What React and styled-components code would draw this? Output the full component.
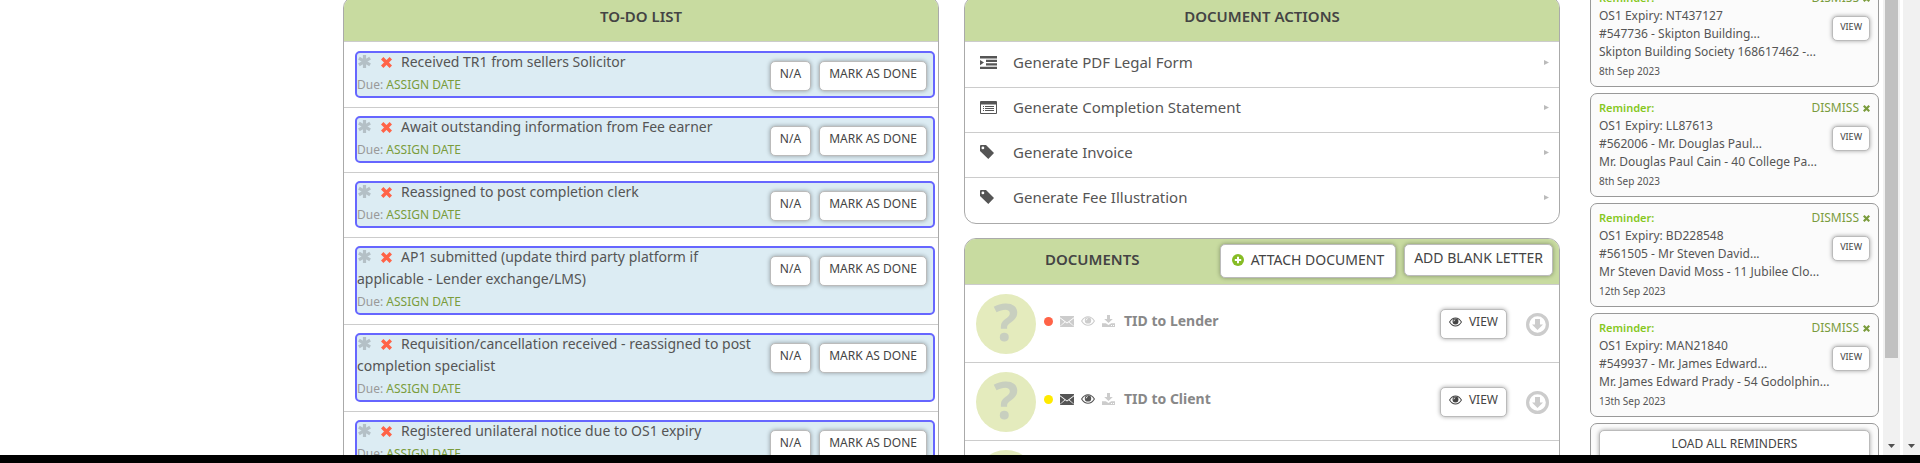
import React from "react";
import styled, { createGlobalStyle } from "styled-components";

const GlobalStyle = createGlobalStyle`
  * { box-sizing: border-box; }
  body {
    margin: 0;
    background: #fff;
    color: #555;
    font-family: "Noto Sans", "Open Sans", sans-serif;
    font-size: 14px;
  }
  h2, h3, p, ul { margin: 0; padding: 0; }
  ul { list-style: none; }
  svg { display: block; flex: none; }
`;

const Window = styled.div`
  display: flex;
  flex-direction: column;
  height: 100vh;
  overflow: hidden;
`;

const Viewport = styled.div`
  display: flex;
  flex: 1;
  min-height: 0;
  overflow: hidden;
`;

const BottomBar = styled.div`
  flex: none;
  height: 8px;
  background: #000;
`;

const Main = styled.main`
  display: grid;
  grid-template-columns: 1fr 1fr;
  gap: 25px;
  flex: 1;
  min-width: 0;
  margin-top: -4px;
  margin-left: 343px;
  align-items: start;
`;

const Column = styled.div`
  display: flex;
  flex-direction: column;
  gap: 14px;
  min-width: 0;
`;

const Panel = styled.section`
  border: 1px solid #aaa;
  border-radius: 12px;
  overflow: hidden;
`;

const PanelHeader = styled.header`
  display: flex;
  justify-content: center;
  height: 45px;
  padding-top: 8px;
  border-bottom: 1px solid #ccc;
  background: #c8dba0;
`;

const ToolHeader = styled(PanelHeader)`
  justify-content: flex-end;
  align-items: flex-start;
  gap: 8px;
  height: 46px;
  padding: 5px 6px 0 80px;
`;

const Title = styled.h2`
  color: #444;
  font-size: 15px;
  font-weight: 600;
  line-height: 22px;
  white-space: nowrap;
`;

const ToolTitle = styled(Title)`
  margin-right: auto;
  padding-top: 4px;
`;

const Button = styled.button`
  display: inline-flex;
  flex: none;
  align-items: center;
  justify-content: center;
  gap: 7px;
  height: 30px;
  padding: 0 8px 4px;
  border: 1px solid #bbb;
  border-radius: 5px;
  background: #fff;
  box-shadow: 0 0 4px rgba(0, 0, 0, 0.35);
  color: #444;
  font-family: inherit;
  font-size: 12px;
  line-height: 18px;
  white-space: nowrap;
`;

const TaskButton = styled(Button)`
  padding: 0 9px 4px;
`;

const AttachButton = styled(Button)`
  height: 34px;
  padding: 0 11px 2px;
  font-size: 14px;
`;

const LetterButton = styled(Button)`
  height: 32px;
  padding: 0 9px 4px;
  font-size: 14px;
`;

const TaskList = styled.ul`
  padding-top: 1px;
`;

const Task = styled.li`
  padding: 8px 3px 9px 11px;
  border-bottom: 1px solid #ccc;
`;

const TaskBox = styled.div`
  display: flex;
  align-items: flex-start;
  gap: 8px;
  padding-right: 6px;
  border: 2px solid #6666ff;
  border-radius: 5px;
  background: #dcecf3;
`;

const TaskText = styled.div`
  flex: 1;
  min-width: 0;
  margin-top: -2px;
  padding-bottom: 2px;
`;

const TaskName = styled.h3`
  color: #555;
  font-size: 14px;
  font-weight: 400;
  line-height: 22px;

  svg { display: inline-block; vertical-align: -1px; margin: 0 9px 0 1px; }
`;

const Due = styled.p`
  padding-top: 3px;
  color: #999;
  font-size: 12px;
  line-height: 18px;
`;

const GreenLink = styled.a`
  color: #7a9c3c;
  text-decoration: none;
`;

const TaskButtons = styled.div`
  display: flex;
  gap: 8px;
  padding-top: 8px;
`;

const ActionList = styled.ul`
  padding-top: 1px;
`;

const Action = styled.li`
  min-height: 45px;
  border-bottom: 1px solid #ccc;
  &:last-child { border-bottom: 0; }
`;

const ActionLink = styled.a`
  display: grid;
  grid-template-columns: 33px 1fr auto;
  align-items: center;
  height: 44px;
  padding: 0 10px 6px 15px;
  color: #555;
  font-size: 15px;
  text-decoration: none;
`;

const DocRow = styled.li`
  display: flex;
  align-items: flex-start;
  padding: 9px 10px 8px 11px;
  border-bottom: 1px solid #ccc;
`;

const Badge = styled.span`
  display: flex;
  align-items: center;
  justify-content: center;
  width: 60px;
  height: 60px;
  padding-bottom: 6px;
  border-radius: 50%;
  background: #e4ebbd;
  color: #c8cfbf;
  font-size: 52px;
  font-weight: 700;
  line-height: 60px;
`;

const DocInfo = styled.div`
  display: flex;
  align-items: center;
  gap: 7px;
  flex: 1;
  padding: 16px 0 0 8px;
`;

const Dot = styled.span`
  width: 9px;
  height: 9px;
  border-radius: 50%;
  background: ${(p) => p.$color};
`;

const DocName = styled.h3`
  padding-left: 2px;
  color: #888;
  font-size: 14px;
  font-weight: 700;
  line-height: 22px;
`;

const DocButtons = styled.div`
  display: flex;
  align-items: center;
  gap: 19px;
  padding-top: 15px;
`;

const IconLink = styled.a`
  display: block;
  color: #ccc;
`;

const Reminders = styled.aside`
  display: flex;
  flex-direction: column;
  gap: 6px;
  flex: none;
  width: 289px;
  margin: -17px 4px 0 30px;
`;

const Card = styled.article`
  flex: none;
  height: 104px;
  padding: 5px 8px;
  border: 1px solid #999;
  border-radius: 7px;
  background: #fbfbfb;
`;

const CardTop = styled.div`
  display: flex;
  justify-content: space-between;
  line-height: 18px;
`;

const CardLabel = styled.h3`
  color: #86c81e;
  font-size: 11px;
  font-weight: 600;
`;

const Dismiss = styled(GreenLink)`
  display: flex;
  align-items: center;
  gap: 4px;
  font-size: 12px;
`;

const CardBody = styled.div`
  display: grid;
  grid-template-columns: 1fr auto;
  font-size: 12px;
  line-height: 18px;
`;

const Lines = styled.div`
  grid-area: 1 / 1 / 2 / 3;
  white-space: nowrap;
`;

const SmallButton = styled(Button)`
  grid-area: 1 / 2 / 2 / 3;
  height: 25px;
  margin-top: 9px;
  padding: 0 7px 4px;
  font-size: 9px;
`;

const DateText = styled.p`
  font-size: 10px;
  line-height: 20px;
`;

const LoadButton = styled(Button)`
  width: 100%;
  margin-top: 1px;
  padding-bottom: 2px;
`;

const Track = styled.div`
  display: flex;
  flex-direction: column;
  justify-content: space-between;
  align-items: center;
  flex: none;
  width: 17px;
  margin-right: ${(p) => p.$gap || 0}px;
  padding-bottom: 7px;
  background: #f1f1f1;
`;

const Thumb = styled.div`
  width: 13px;
  height: 80%;
  background: #c1c1c1;
`;

const ArrowSvg = styled.svg`
  margin-top: auto;
`;

const ScrollArrow = () => (
  <ArrowSvg width="7" height="4" viewBox="0 0 7 4" fill="#505050">
    <path d="M0 0h7L3.5 4z" />
  </ArrowSvg>
);

const Asterisk = () => (
  <svg width="13" height="13" viewBox="0 0 13 13" stroke="#b4c0c6" strokeWidth="3.2">
    <path d="M6.500 0v13M.9 3.200l11.200 6.600M.9 9.800L12.100 3.200" />
  </svg>
);

const Cross = ({ size = 11, color = "#ff6347" }) => (
  <svg width={size} height={size} viewBox="0 0 11 11" stroke={color} strokeWidth="3.4">
    <path d="M1.200 1.200l8.600 8.600M9.800 1.200L1.200 9.800" />
  </svg>
);

const IndentIcon = () => (
  <svg width="17" height="13" viewBox="0 0 17 13" fill="#555">
    <path d="M0 0h17v2.400H0zM6 3.700h11V6H6zM6 7.200h11v2.400H6zM0 10.700h17V13H0zM0 3.900l4 2.700-4 2.700z" />
  </svg>
);

const ListIcon = () => (
  <svg width="17" height="13" viewBox="0 0 17 13" fill="#555">
    <path
      fillRule="evenodd"
      d="M1 0h15q1 0 1 1v11q0 1-1 1H1q-1 0-1-1V1q0-1 1-1zM1 3.500v8.500h15V3.500zM3 5h1v1H3zM5 5h9v1H5zM3 7h1v1H3zM5 7h9v1H5zM3 9h1v1H3zM5 9h9v1H5z"
    />
  </svg>
);

const TagIcon = () => (
  <svg width="14" height="14" viewBox="0 0 14 14" fill="#555">
    <path fillRule="evenodd" d="M0 1q0-1 1-1h5l8 8-5.700 6L0 6zM2.900 1.500a1.400 1.400 0 100 2.800 1.400 1.400 0 000-2.800z" />
  </svg>
);

const PlusIcon = () => (
  <svg width="12" height="12" viewBox="0 0 12 12">
    <circle cx="6" cy="6" r="6" fill="#86bc25" />
    <path d="M6 2.800v6.400M2.800 6h6.400" stroke="#fff" strokeWidth="2" />
  </svg>
);

const MailIcon = ({ color }) => (
  <svg width="14" height="11" viewBox="0 0 14 11" fill={color}>
    <path d="M0 0h14v1.300L7 6.600 0 1.300zM0 2.200l4.600 3.500L0 9.900zM14 2.200v7.700L9.400 5.700zM5.200 6.200L7 7.600l1.800-1.400L14 10.600v.4H0v-.4z" />
  </svg>
);

const EyeIcon = ({ color = "#444", width = 14 }) => (
  <svg width={width} height="10" viewBox="0 0 14 10" fill="none" stroke={color}>
    <path d="M.6 5Q3.200.7 7 .7T13.400 5Q10.800 9.300 7 9.300T.6 5z" strokeWidth="1.100" />
    <circle cx="7" cy="4.400" r="3.200" fill={color} stroke="none" />
    <path d="M5.200 4.300Q5.300 2.800 6.700 2.600" stroke="#fff" strokeWidth=".9" />
  </svg>
);

const SaveIcon = () => (
  <svg width="13" height="12" viewBox="0 0 13 12" fill="#ccc">
    <path d="M5 0h3v4h2.800L6.500 8 2.200 4H5z" />
    <path fillRule="evenodd" d="M0 8.300h3.800L6.500 10l2.700-1.700H13V12H0zM9 10h1v1H9zM11 10h1v1h-1z" />
  </svg>
);

const DownCircle = () => (
  <svg width="23" height="23" viewBox="0 0 23 23" fill="none" stroke="#ccc">
    <circle cx="11.500" cy="11.500" r="9.900" strokeWidth="3.200" />
    <path d="M9 6h5v5.500h3L11.500 17 6 11.500h3z" fill="#ccc" stroke="none" />
  </svg>
);

const tasks = [
  "Received TR1 from sellers Solicitor",
  "Await outstanding information from Fee earner",
  "Reassigned to post completion clerk",
  "AP1 submitted (update third party platform if applicable - Lender exchange/LMS)",
  "Requisition/cancellation received - reassigned to post completion specialist",
  "Registered unilateral notice due to OS1 expiry",
];

const actions = [
  ["Generate PDF Legal Form", IndentIcon],
  ["Generate Completion Statement", ListIcon],
  ["Generate Invoice", TagIcon],
  ["Generate Fee Illustration", TagIcon],
];

const documents = [
  { id: 1, name: "TID to Lender", dot: "#ff6347", tone: "#ccc" },
  { id: 2, name: "TID to Client", dot: "#ffea00", tone: "#555" },
  { id: 3 },
];

const reminders = [
  ["OS1 Expiry: NT437127", "#547736 - Skipton Building...", "Skipton Building Society 168617462 -...", "8th Sep 2023"],
  ["OS1 Expiry: LL87613", "#562006 - Mr. Douglas Paul...", "Mr. Douglas Paul Cain - 40 College Pa...", "8th Sep 2023"],
  ["OS1 Expiry: BD228548", "#561505 - Mr Steven David...", "Mr Steven David Moss - 11 Jubilee Clo...", "12th Sep 2023"],
  ["OS1 Expiry: MAN21840", "#549937 - Mr. James Edward...", "Mr. James Edward Prady - 54 Godolphin...", "13th Sep 2023"],
];

export default function App() {
  return (
    <Window>
      <GlobalStyle />
      <Viewport>
        <Main>
          <Panel>
            <PanelHeader>
              <Title>TO-DO LIST</Title>
            </PanelHeader>
            <TaskList>
              {tasks.map((name) => (
                <Task key={name}>
                  <TaskBox>
                    <TaskText>
                      <TaskName>
                        <Asterisk />
                        <Cross />
                        {name}
                      </TaskName>
                      <Due>
                        Due: <GreenLink href="#assign">ASSIGN DATE</GreenLink>
                      </Due>
                    </TaskText>
                    <TaskButtons>
                      <TaskButton type="button">N/A</TaskButton>
                      <TaskButton type="button">MARK AS DONE</TaskButton>
                    </TaskButtons>
                  </TaskBox>
                </Task>
              ))}
            </TaskList>
          </Panel>

          <Column>
            <Panel>
              <PanelHeader>
                <Title>DOCUMENT ACTIONS</Title>
              </PanelHeader>
              <ActionList>
                {actions.map(([name, Icon]) => (
                  <Action key={name}>
                    <ActionLink href="#generate">
                      <Icon />
                      {name}
                      <svg width="5" height="5" viewBox="0 0 5 5" fill="#bbb">
                        <path d="M0 0l5 2.500L0 5z" />
                      </svg>
                    </ActionLink>
                  </Action>
                ))}
              </ActionList>
            </Panel>

            <Panel>
              <ToolHeader>
                <ToolTitle>DOCUMENTS</ToolTitle>
                <AttachButton type="button">
                  <PlusIcon />
                  ATTACH DOCUMENT
                </AttachButton>
                <LetterButton type="button">ADD BLANK LETTER</LetterButton>
              </ToolHeader>
              <ul>
                {documents.map((doc) => (
                  <DocRow key={doc.id}>
                    <Badge>?</Badge>
                    {doc.name && (
                      <>
                        <DocInfo>
                          <Dot $color={doc.dot} />
                          <MailIcon color={doc.tone} />
                          <EyeIcon color={doc.tone} />
                          <SaveIcon />
                          <DocName>{doc.name}</DocName>
                        </DocInfo>
                        <DocButtons>
                          <Button type="button">
                            <EyeIcon width={13} />
                            VIEW
                          </Button>
                          <IconLink href="#download" aria-label="Download">
                            <DownCircle />
                          </IconLink>
                        </DocButtons>
                      </>
                    )}
                  </DocRow>
                ))}
              </ul>
            </Panel>
          </Column>
        </Main>

        <Reminders>
          {reminders.map(([title, matter, client, date]) => (
            <Card key={title}>
              <CardTop>
                <CardLabel>Reminder:</CardLabel>
                <Dismiss href="#dismiss">
                  DISMISS <Cross size={7} color="#7a9c3c" />
                </Dismiss>
              </CardTop>
              <CardBody>
                <Lines>
                  <p>{title}</p>
                  <p>{matter}</p>
                  <p>{client}</p>
                </Lines>
                <SmallButton type="button">VIEW</SmallButton>
              </CardBody>
              <DateText>{date}</DateText>
            </Card>
          ))}
          <Card>
            <LoadButton type="button">LOAD ALL REMINDERS</LoadButton>
          </Card>
        </Reminders>

        <Track $gap={3}>
          <Thumb />
          <ScrollArrow />
        </Track>
        <Track>
          <ScrollArrow />
        </Track>
      </Viewport>
      <BottomBar />
    </Window>
  );
}
